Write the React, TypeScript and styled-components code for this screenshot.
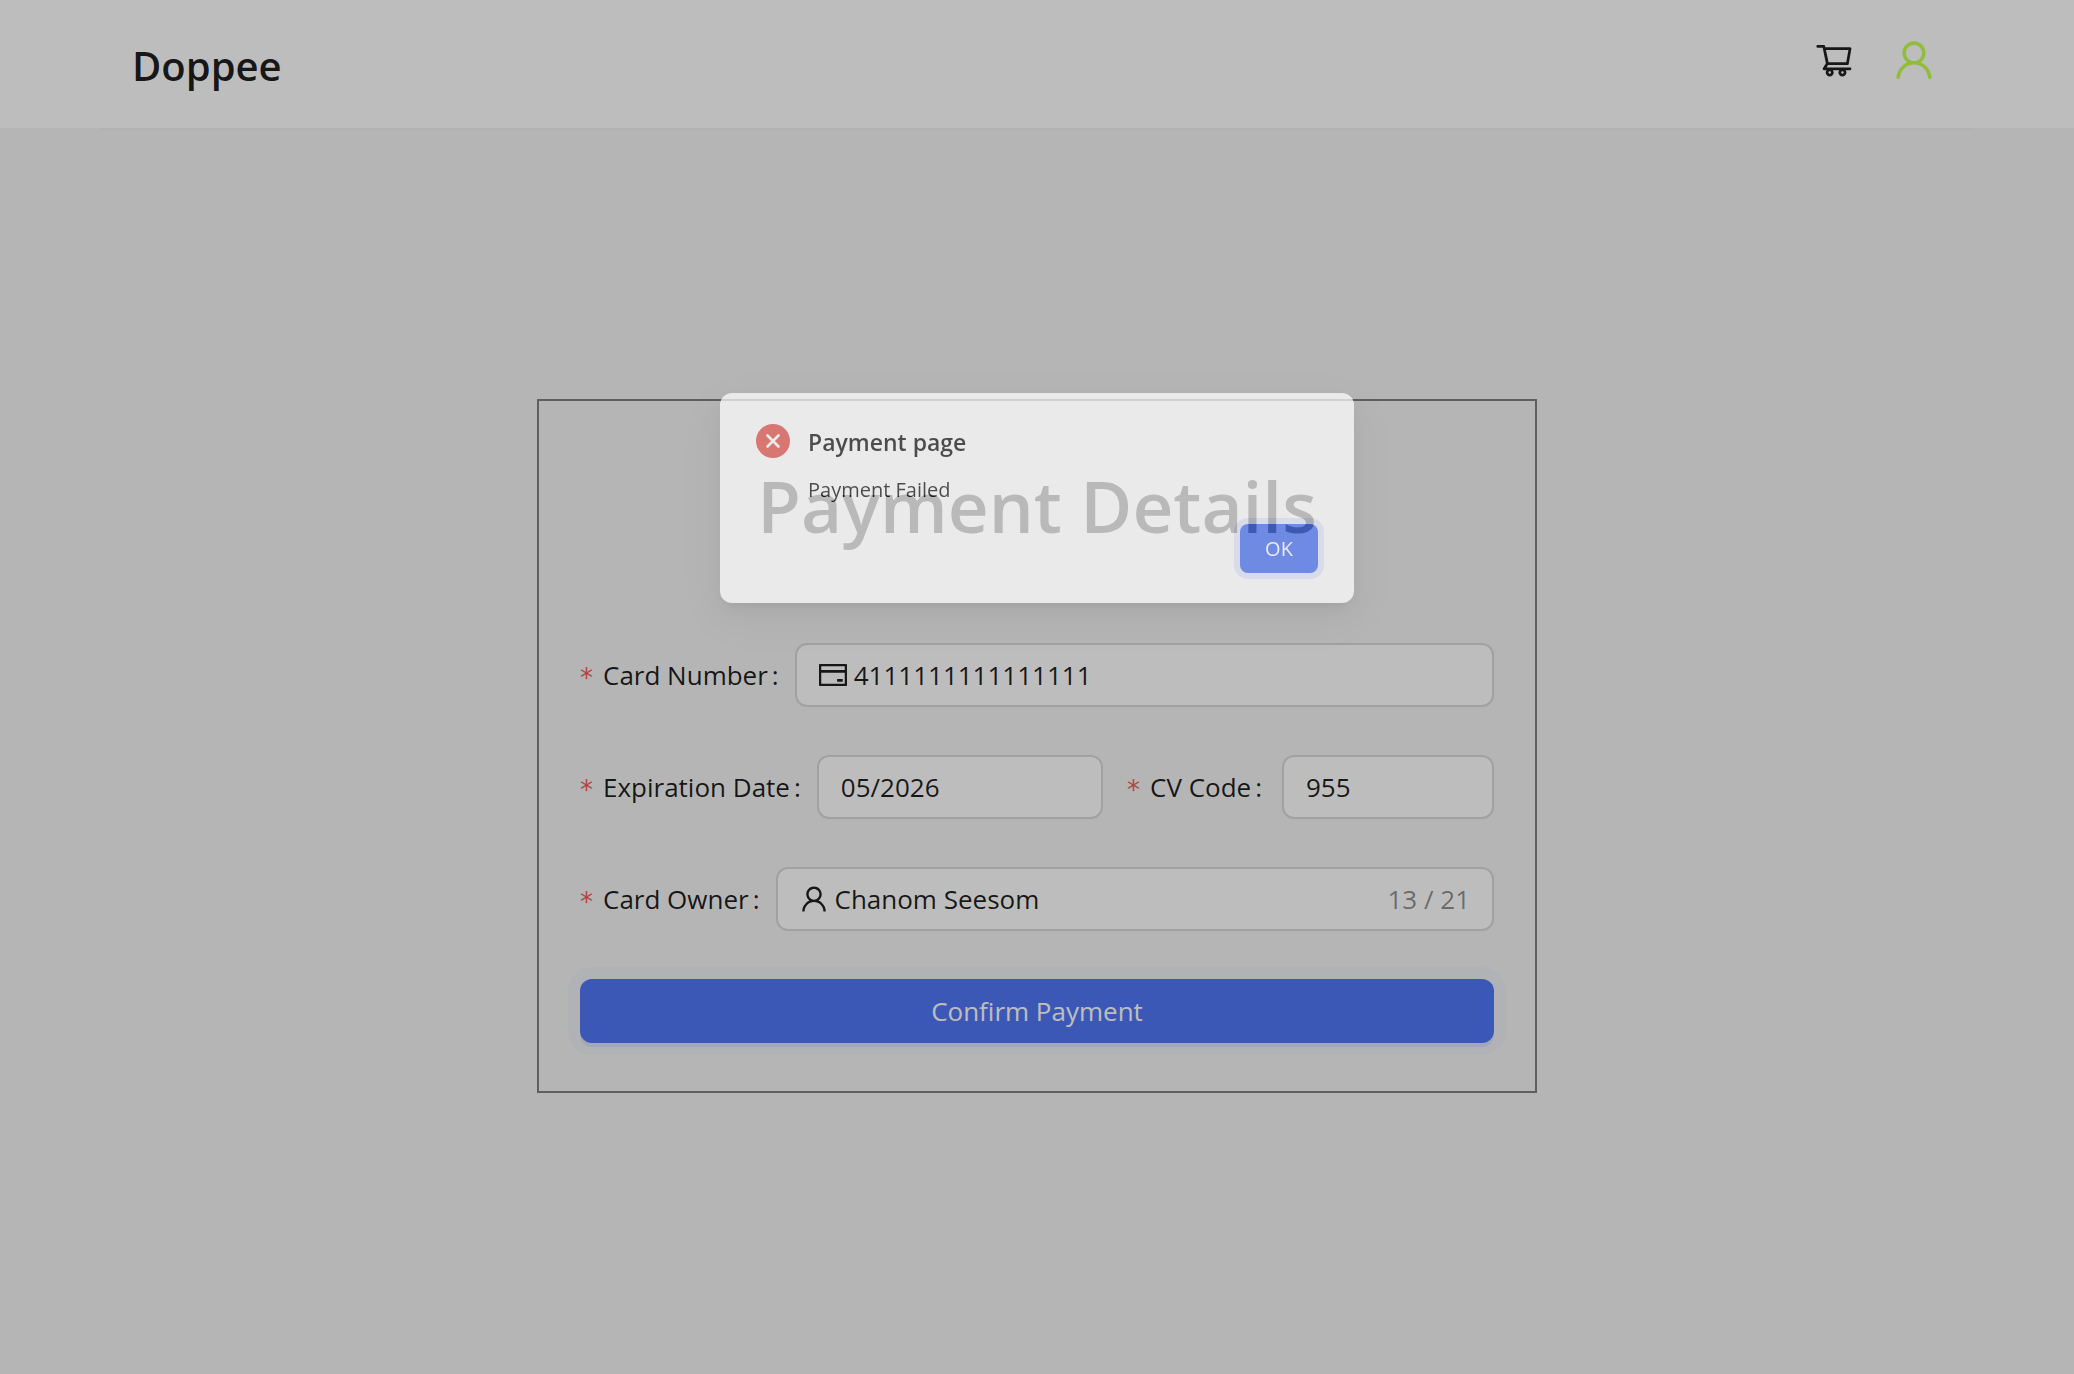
import React from "react";
import styled, { createGlobalStyle, css } from "styled-components";
import {
  AiOutlineShoppingCart,
  AiOutlineUser,
  AiOutlineCreditCard,
} from "react-icons/ai";

const font = `"Open Sans", "Noto Sans", sans-serif`;
const ink = "rgba(0, 0, 0, 0.88)";
const primary = "#5077f6";

const GlobalStyle = createGlobalStyle`
  *, *::before, *::after { box-sizing: border-box; }
  body {
    margin: 0;
    background: #f5f5f5;
    color: ${ink};
    font-family: ${font};
    font-size: 26px;
    line-height: 40px;
  }
  input, button { font: inherit; color: inherit; }
`;

const Page = styled.div`
  min-height: 100vh;
  display: flex;
  flex-direction: column;
`;

const Header = styled.header`
  height: 128px;
  padding: 0 100px;
  background: #ffffff;
`;

const HeaderInner = styled.div`
  height: 130px;
  padding: 4px 32px 0;
  display: flex;
  align-items: center;
  justify-content: space-between;
  border-bottom: 2px solid #f0f0f0;
`;

const Brand = styled.h2`
  margin: 0;
  font-size: 40px;
  line-height: 52px;
  font-weight: 600;
`;

const HeaderNav = styled.nav`
  display: flex;
  align-items: center;
  gap: 36px;
  padding: 0 4px 12px 0;
`;

const NavLink = styled.a<{ $active?: boolean }>`
  display: flex;
  font-size: ${(p) => (p.$active ? 48 : 40)}px;
  color: ${(p) => (p.$active ? "#c5ff51" : ink)};
`;

const Main = styled.main`
  flex: 1;
  display: flex;
  align-items: center;
  justify-content: center;
  padding: 0 32px 10px;
`;

const Card = styled.form`
  width: 100%;
  max-width: 1000px;
  padding: 71px 41px 48px;
  border: 2px solid #808080;
  display: flex;
  flex-direction: column;
  gap: 48px;
`;

const CardTitle = styled.h1`
  margin: 0 0 55px;
  font-size: 71px;
  line-height: 68px;
  font-weight: 600;
  text-align: center;
`;

const Row = styled.div`
  display: flex;
  gap: 24px;
`;

const Field = styled.div<{ $grow?: number }>`
  flex: ${(p) => p.$grow ?? 1} 1 0;
  min-width: 0;
  display: flex;
  align-items: center;
  justify-content: space-between;
`;

const Label = styled.label`
  display: flex;
  align-items: center;
  white-space: nowrap;
  margin-right: 16px;
`;

const Required = styled.span`
  padding-top: 6px;
  margin-right: 10px;
  font-family: "DejaVu Sans", sans-serif;
  color: #ee5f5b;
`;

const Colon = styled.span`
  margin-left: 4px;
`;

const InputBox = styled.div<{ $width?: number }>`
  flex: ${(p) => (p.$width ? `0 0 ${p.$width}px` : "1")};
  min-width: 0;
  height: 64px;
  padding: 0 22px;
  display: flex;
  align-items: center;
  gap: 5px;
  border: 2px solid #d9d9d9;
  border-radius: 12px;
  background: #ffffff;
`;

const InputIcon = styled.span`
  display: flex;
  margin-left: -2px;
  font-size: 32px;
`;

const Input = styled.input`
  flex: 1;
  min-width: 0;
  width: 100%;
  padding: 0;
  border: 0;
  outline: 0;
  background: transparent;
`;

const Count = styled.span`
  color: rgba(0, 0, 0, 0.45);
`;

const buttonBase = css`
  border: 0;
  border-radius: 12px;
  background: ${primary};
  color: #ffffff;
  cursor: pointer;
`;

const ConfirmButton = styled.button`
  ${buttonBase}
  height: 64px;
  box-shadow: 0 4px 0 rgba(5, 80, 255, 0.08), 0 0 0 12px rgba(80, 119, 246, 0.04);
`;

const Mask = styled.div`
  position: fixed;
  inset: 0;
  background: rgba(0, 0, 0, 0.26);
`;

const ModalLayer = styled.div`
  position: fixed;
  inset: 0;
  padding: 393px 24px 0;
  display: flex;
  align-items: flex-start;
  justify-content: center;
`;

const Modal = styled.section`
  width: 634px;
  padding: 31px 36px 30px;
  border-radius: 12px;
  background: #ffffff;
  opacity: 0.7;
  font-size: 20px;
  line-height: 32px;
  box-shadow: 0 10px 24px rgba(0, 0, 0, 0.08), 0 5px 10px -6px rgba(0, 0, 0, 0.12),
    0 14px 44px 12px rgba(0, 0, 0, 0.05);
`;

const ModalBody = styled.div`
  display: flex;
  gap: 18px;
`;

const ErrorIcon = styled.svg`
  flex: none;
  width: 34px;
  height: 34px;
`;

const ModalTitle = styled.h2`
  margin: 2px 0 16px;
  font-size: 23px;
  line-height: 32px;
  font-weight: 600;
`;

const ModalText = styled.p`
  margin: 0;
`;

const ModalActions = styled.div`
  display: flex;
  justify-content: flex-end;
  margin-top: 18px;
`;

const OkButton = styled.button`
  ${buttonBase}
  width: 78px;
  height: 49px;
  border-radius: 8px;
  box-shadow: 0 0 0 6px rgba(80, 119, 246, 0.14);
`;

type FormFieldProps = {
  id: string;
  label: string;
  value: string;
  grow?: number;
  boxWidth?: number;
  icon?: React.ReactNode;
  count?: string;
};

function FormField({ id, label, value, grow, boxWidth, icon, count }: FormFieldProps) {
  return (
    <Field $grow={grow}>
      <Label htmlFor={id}>
        <Required>*</Required>
        {label}
        <Colon>:</Colon>
      </Label>
      <InputBox $width={boxWidth}>
        {icon && <InputIcon>{icon}</InputIcon>}
        <Input id={id} defaultValue={value} />
        {count && <Count>{count}</Count>}
      </InputBox>
    </Field>
  );
}

export default function App() {
  return (
    <>
      <GlobalStyle />
      <Page>
        <Header>
          <HeaderInner>
            <Brand>Doppee</Brand>
            <HeaderNav>
              <NavLink href="#cart" aria-label="Cart">
                <AiOutlineShoppingCart />
              </NavLink>
              <NavLink href="#account" aria-label="Account" $active>
                <AiOutlineUser />
              </NavLink>
            </HeaderNav>
          </HeaderInner>
        </Header>
        <Main>
          <Card onSubmit={(e) => e.preventDefault()}>
            <CardTitle>Payment Details</CardTitle>
            <FormField
              id="card-number"
              label="Card Number"
              value="4111111111111111"
              icon={<AiOutlineCreditCard />}
            />
            <Row>
              <FormField id="expiration" label="Expiration Date" value="05/2026" grow={523} />
              <FormField id="cv-code" label="CV Code" value="955" grow={367} boxWidth={212} />
            </Row>
            <FormField
              id="card-owner"
              label="Card Owner"
              value="Chanom Seesom"
              icon={<AiOutlineUser />}
              count="13 / 21"
            />
            <ConfirmButton type="submit">Confirm Payment</ConfirmButton>
          </Card>
        </Main>
      </Page>
      <Mask />
      <ModalLayer>
        <Modal role="dialog" aria-labelledby="modal-title">
          <ModalBody>
            <ErrorIcon viewBox="0 0 34 34" aria-hidden="true">
              <circle cx="17" cy="17" r="17" fill="#e65a54" />
              <path
                d="M11.5 11.5 22.5 22.5 M22.5 11.5 11.5 22.5"
                stroke="#ffffff"
                strokeWidth="2.6"
                strokeLinecap="round"
              />
            </ErrorIcon>
            <div>
              <ModalTitle id="modal-title">Payment page</ModalTitle>
              <ModalText>Payment Failed</ModalText>
            </div>
          </ModalBody>
          <ModalActions>
            <OkButton type="button">OK</OkButton>
          </ModalActions>
        </Modal>
      </ModalLayer>
    </>
  );
}
